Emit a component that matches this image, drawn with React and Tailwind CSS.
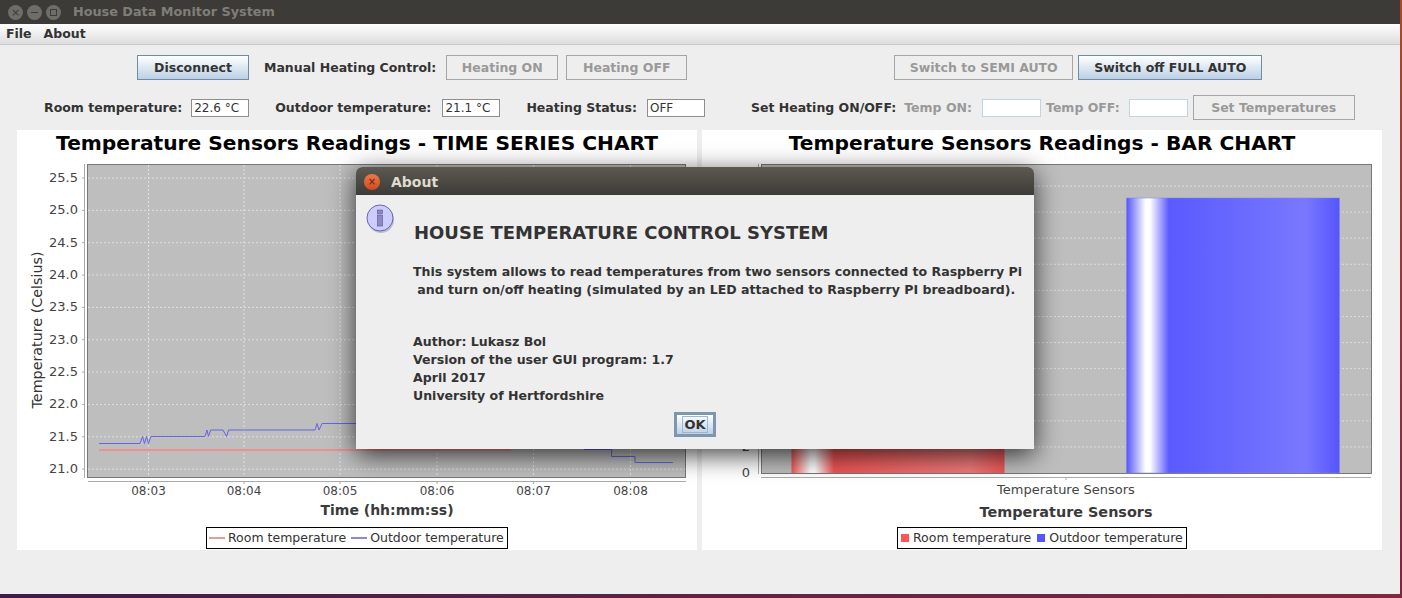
const font = { fontFamily: '"DejaVu Sans", sans-serif' };

function Btn({ children, active, w, className = "" }) {
  return (
    <div
      className={`h-[25px] flex items-center justify-center border pt-px text-[12.5px] font-bold ${w} ${
        active
          ? "border-[#6f8ba8] bg-gradient-to-b from-white to-[#bcd0e4] text-[#333333]"
          : "border-[#a5a5a5] bg-[#eeeeee] text-[#999999]"
      } ${className}`}
    >
      {children}
    </div>
  );
}

function Label({ children, dim, className = "" }) {
  return <span className={`pt-px text-[12.5px] font-bold whitespace-nowrap ${dim ? "text-[#999999]" : "text-[#333333]"} ${className}`}>{children}</span>;
}

function Field({ value, w = "w-[58px]", blue, className = "" }) {
  return (
    <div className={`h-[18px] ${w} border ${blue ? "border-[#c4d3e2]" : "border-[#8e8e8e]"} bg-white text-[12px] leading-[16px] pl-[2px] text-[#333333] ${className}`}>
      {value}
    </div>
  );
}

function Legend({ items, square, className }) {
  return (
    <div className={`h-[22px] border border-black bg-white flex items-center text-[12.5px] text-[#333333] ${className}`}>
      {items.map(([t, c, mr]) => (
        <div key={t} className={`flex items-center ${mr}`}>
          {square ? (
            <span className="w-[8px] h-[8px] mr-[4px]" style={{ background: c }} />
          ) : (
            <span className="w-[16px] h-[2px] mr-[3px]" style={{ background: c }} />
          )}
          <span className="whitespace-nowrap">{t}</span>
        </div>
      ))}
    </div>
  );
}

function LineChart() {
  const yt = ["25.5", "25.0", "24.5", "24.0", "23.5", "23.0", "22.5", "22.0", "21.5", "21.0"];
  const yy = (i) => 48 + i * 32.35;
  const xt = [[131.5, "08:03"], [227, "08:04"], [323, "08:05"], [420, "08:06"], [516.5, "08:07"], [613.5, "08:08"]];
  return (
    <svg width="680" height="394" className="absolute left-0 top-0" fontFamily="DejaVu Sans, sans-serif">
      <rect x="70.5" y="34.5" width="598" height="313" fill="#bebebe" stroke="#777777" />
      {yt.map((t, i) => (
        <g key={t}>
          <line x1="71" x2="668" y1={yy(i)} y2={yy(i)} stroke="#e0e0e0" strokeDasharray="2 2" />
          <line x1="65" x2="68" y1={yy(i)} y2={yy(i)} stroke="#aaaaaa" />
          <text x="61" y={yy(i) + 4} textAnchor="end" fontSize="13" fill="#444444">{t}</text>
        </g>
      ))}
      {xt.map(([x, t]) => (
        <g key={t}>
          <line x1={x} x2={x} y1="35" y2="347" stroke="#e0e0e0" strokeDasharray="2 2" />
          <line x1={x} x2={x} y1="351" y2="354" stroke="#aaaaaa" />
          <text x={x} y="365" textAnchor="middle" fontSize="12" fill="#444444">{t}</text>
        </g>
      ))}
      <line x1="67.5" x2="67.5" y1="34" y2="348" stroke="#aaaaaa" />
      <line x1="71" x2="669" y1="351.5" y2="351.5" stroke="#aaaaaa" />
      <path d="M82 320H493V200H668" fill="none" stroke="#ee9090" strokeWidth="2" />
      <path
        d="M82 313.5H123L125.5 306.5L127.5 313.5L129.5 306.5L131.5 313.5L134 306.5H188L190 300L191.5 306.5L193.7 300H206L209.5 306.5L211.6 300H298L300 293.5L302 300L305 293.5H360V300H567V319.5H594.6V326.5H618V332.5H656"
        fill="none"
        stroke="#6565e5"
      />
      <text x="370" y="385" textAnchor="middle" fontSize="14" fontWeight="700" fill="#3a3a3a">Time (hh:mm:ss)</text>
      <text transform="translate(25 200) rotate(-90)" textAnchor="middle" fontSize="14.3" fill="#333333">Temperature (Celsius)</text>
    </svg>
  );
}

function BarChart() {
  const yy = (k) => 343 - 26.09 * k;
  return (
    <svg width="680" height="394" className="absolute left-0 top-0" fontFamily="DejaVu Sans, sans-serif">
      <defs>
        <linearGradient id="blue" x1="0" x2="1" y1="0" y2="0">
          <stop offset="0" stopColor="#5555ff" />
          <stop offset="0.09" stopColor="#ffffff" />
          <stop offset="0.11" stopColor="#ffffff" />
          <stop offset="0.2" stopColor="#5a5aff" />
          <stop offset="0.84" stopColor="#7878ff" />
          <stop offset="1" stopColor="#5555ff" />
        </linearGradient>
        <linearGradient id="red" x1="0" x2="1" y1="0" y2="0">
          <stop offset="0" stopColor="#ee5555" />
          <stop offset="0.09" stopColor="#ffffff" />
          <stop offset="0.11" stopColor="#ffffff" />
          <stop offset="0.2" stopColor="#ee5555" />
          <stop offset="0.84" stopColor="#f07a7a" />
          <stop offset="1" stopColor="#ee5555" />
        </linearGradient>
      </defs>
      <rect x="59.5" y="34.5" width="610" height="309" fill="#bebebe" stroke="#777777" />
      {Array.from({ length: 11 }, (_, i) => i + 1).map((k) => (
        <line key={k} x1="60" x2="669" y1={yy(k)} y2={yy(k)} stroke="#dddddd" strokeDasharray="2 2" />
      ))}
      <rect x="89.5" y="48" width="213" height="295" fill="url(#red)" />
      <rect x="424.5" y="68" width="213" height="275" fill="url(#blue)" stroke="#8080e8" strokeWidth="0.5" />
      <line x1="56.5" x2="56.5" y1="34" y2="344" stroke="#aaaaaa" />
      <line x1="59" x2="669" y1="347.5" y2="347.5" stroke="#aaaaaa" />
      <line x1="364" x2="364" y1="347" y2="350" stroke="#aaaaaa" />
      <text x="48" y="347" textAnchor="end" fontSize="13" fill="#444444">0</text>
      <text x="48" y="321" textAnchor="end" fontSize="13" fill="#444444">2</text>
      <text x="364" y="364" textAnchor="middle" fontSize="13" fill="#444444">Temperature Sensors</text>
      <text x="364" y="387" textAnchor="middle" fontSize="14.4" fontWeight="700" fill="#3a3a3a">Temperature Sensors</text>
    </svg>
  );
}

function Panel({ title, children, legend, className = "" }) {
  return (
    <div className={`relative w-[680px] h-[420px] bg-white ${className}`}>
      {children}
      <div className="relative text-center text-[20.2px] leading-[26px] font-bold text-black whitespace-nowrap">{title}</div>
      {legend}
    </div>
  );
}

function Dialog() {
  return (
    <div className="absolute left-[356px] top-[167px] w-[678px] h-[282px] flex flex-col rounded-t-[6px] shadow-[0_6px_26px_rgba(0,0,0,0.75)] bg-[#eeeeee]">
      <div className="h-[28px] shrink-0 flex items-center rounded-t-[6px] bg-gradient-to-b from-[#5c5a50] to-[#3c3b37] pl-[8px] pt-[2px]">
        <span className="w-[16px] h-[16px] rounded-full bg-gradient-to-b from-[#f0774a] to-[#cf4a1c] flex items-center justify-center text-[10px] leading-none text-[#5a2412]">×</span>
        <span className="ml-[11px] text-[14px] font-bold text-[#dfdbd2]">About</span>
      </div>
      <div className="relative flex-1 pl-[57px] pt-[27px] text-[#333333]">
        <svg width="30" height="31" className="absolute left-[9px] top-[8px]" viewBox="0 0 30 31">
          <circle cx="16" cy="17" r="13" fill="#8b8bb8" opacity="0.5" />
          <circle cx="15" cy="15" r="13" fill="#ccccff" stroke="#6666a8" />
          <rect x="12.5" y="7" width="5" height="3.5" fill="#8a8ac4" stroke="#555599" strokeWidth="0.6" />
          <rect x="12.5" y="12" width="5" height="11" fill="#8a8ac4" stroke="#555599" strokeWidth="0.6" />
        </svg>
        <div className="text-[18px] leading-[22px] font-bold pl-px">HOUSE TEMPERATURE CONTROL SYSTEM</div>
        <div className="mt-[19px] text-[12.55px] leading-[18px] font-bold whitespace-pre">
          <div>This system allows to read temperatures from two sensors connected to Raspberry Pi</div>
          <div> and turn on/off heating (simulated by an LED attached to Raspberry PI breadboard).</div>
          <div className="mt-[34px]">Author: Lukasz Bol</div>
          <div>Version of the user GUI program: 1.7</div>
          <div>April 2017</div>
          <div>University of Hertfordshire</div>
        </div>
        <div className="absolute left-[318px] top-[217px] w-[42px] h-[25px] border-[3px] border-[#7f97ae] bg-gradient-to-b from-white to-[#bcd0e4] flex items-center justify-center text-[13px] font-bold text-[#333333]">
          <span className="border border-[#9db7d2] px-[1px] leading-[15px]">OK</span>
        </div>
      </div>
    </div>
  );
}

export default function App() {
  return (
    <div className="relative w-[1402px] h-[598px] overflow-hidden bg-[#eeeeee] flex flex-col" style={font}>
      <div className="flex-1 flex min-h-0">
        <div className="flex-1 min-w-0 flex flex-col">
          <div className="h-[24px] shrink-0 bg-[#3d3b37] flex items-center pl-[8px]">
            <span className="w-[15px] h-[15px] rounded-full bg-[#6e6d68] flex items-center justify-center text-[11px] leading-none text-[#3d3b37]">×</span>
            <span className="ml-[4px] w-[15px] h-[15px] rounded-full bg-[#6e6d68] flex items-center justify-center"><span className="w-[7px] h-px bg-[#3d3b37]" /></span>
            <span className="ml-[4px] w-[15px] h-[15px] rounded-full bg-[#6e6d68] flex items-center justify-center"><span className="w-[7px] h-[7px] border border-[#3d3b37]" /></span>
            <span className="ml-[12px] text-[12.8px] font-bold text-[#7f7e79] whitespace-nowrap">House Data Monitor System</span>
          </div>
          <div className="h-[21px] shrink-0 bg-gradient-to-b from-white to-[#dddddd] border-b border-[#c8c8c8] flex items-center pl-[6px] text-[12.5px] font-bold text-[#333333]">
            <span>File</span>
            <span className="ml-[12px]">About</span>
          </div>

          <div className="mt-[10px] flex items-center pl-[137px]">
            <Btn active w="w-[112px]">Disconnect</Btn>
            <Label className="ml-[15px]">Manual Heating Control:</Label>
            <Btn w="w-[112px]" className="ml-[10px]">Heating ON</Btn>
            <Btn w="w-[121px]" className="ml-[8px]">Heating OFF</Btn>
            <Btn w="w-[179px]" className="ml-[207px]">Switch to SEMI AUTO</Btn>
            <Btn active w="w-[184px]" className="ml-[5px]">Switch off FULL AUTO</Btn>
          </div>

          <div className="mt-[15px] flex items-center pl-[44px]">
            <Label>Room temperature:</Label>
            <Field value="22.6 °C" className="ml-[9px]" />
            <Label className="ml-[26px]">Outdoor temperature:</Label>
            <Field value="21.1 °C" className="ml-[11px]" />
            <Label className="ml-[26px]">Heating Status:</Label>
            <Field value="OFF" className="ml-[10px]" />
            <Label className="ml-[46px]">Set Heating ON/OFF:</Label>
            <Label dim className="ml-[8px]">Temp ON:</Label>
            <Field blue w="w-[59px]" className="ml-[10px]" />
            <Label dim className="ml-[5px]">Temp OFF:</Label>
            <Field blue w="w-[59px]" className="ml-[9px]" />
            <Btn w="w-[162px]" className="ml-[5px]">Set Temperatures</Btn>
          </div>

          <div className="mt-[10px] flex pl-[17px] gap-[5px]">
            <Panel title="Temperature Sensors Readings - TIME SERIES CHART"
              legend={<Legend className="absolute left-[189px] top-[397px] w-[302px] pl-[2px]" items={[["Room temperature", "#ee9999", "mr-[5px]"], ["Outdoor temperature", "#8888dd", ""]]} />}>
              <LineChart />
            </Panel>
            <Panel title="Temperature Sensors Readings - BAR CHART"
              legend={<Legend square className="absolute left-[195px] top-[397px] w-[290px] pl-[3px]" items={[["Room temperature", "#ff5555", "mr-[6px]"], ["Outdoor temperature", "#5555ff", ""]]} />}>
              <BarChart />
            </Panel>
          </div>
        </div>
        <div className="w-[2px] shrink-0 bg-gradient-to-b from-[#b0452c] to-[#7d2440]" />
      </div>
      <div className="h-[4px] shrink-0 bg-gradient-to-r from-[#3f1a4a] to-[#80283f]" />
      <Dialog />
    </div>
  );
}
